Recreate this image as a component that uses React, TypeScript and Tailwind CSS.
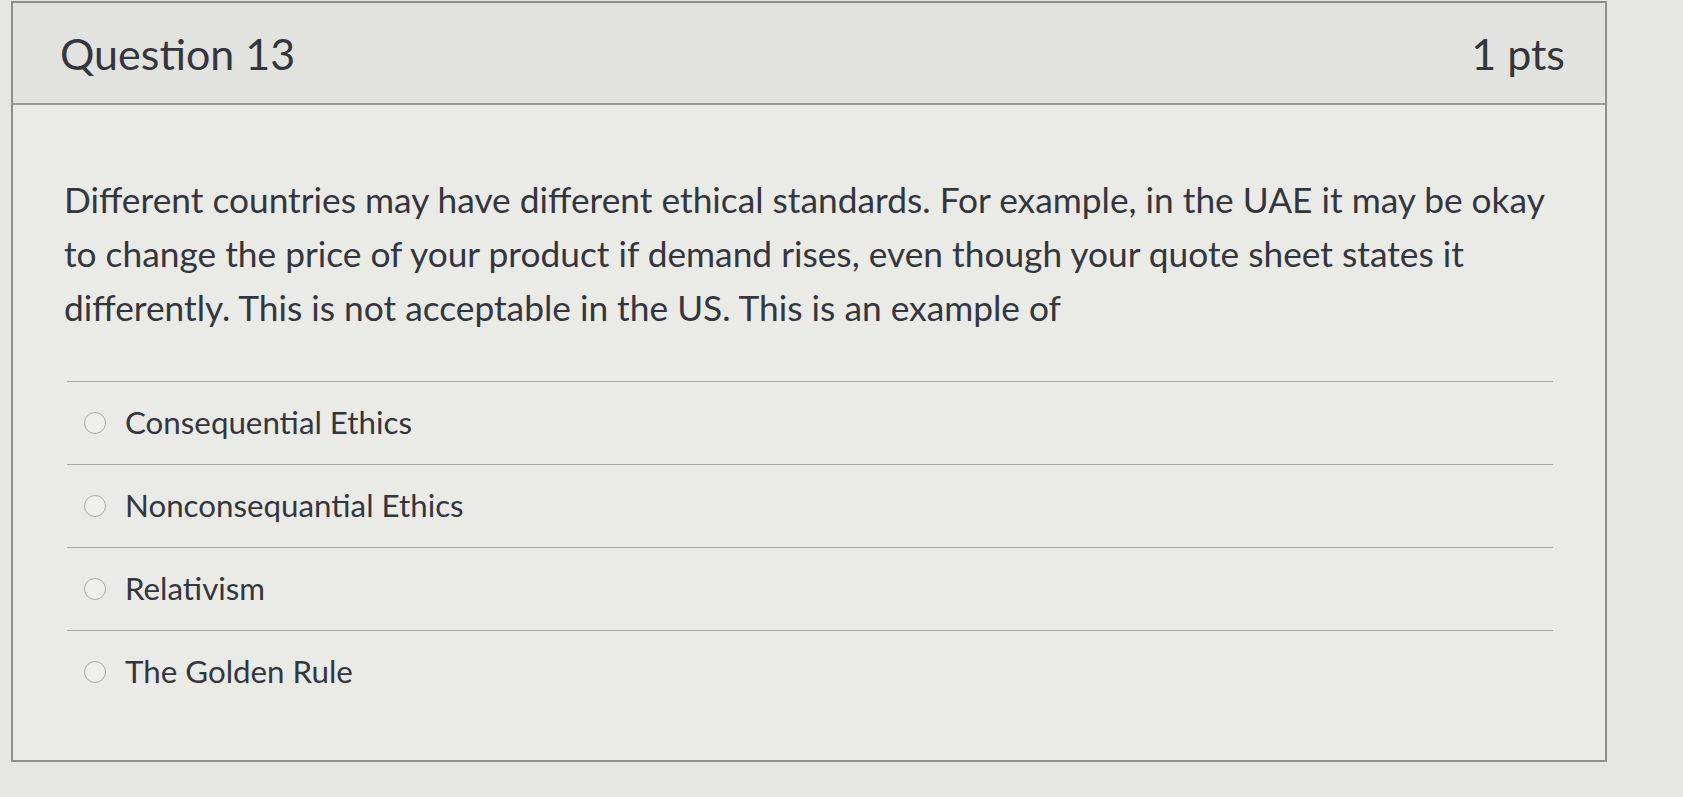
import React from "react";

const answers = [
  "Consequential Ethics",
  "Nonconsequantial Ethics",
  "Relativism",
  "The Golden Rule",
];

export default function App() {
  return (
    <div
      className="w-[1683px] h-[797px] bg-[#e6e6e2] overflow-hidden pt-[1px] pl-[11px]"
      style={{ fontFamily: "Lato, 'Open Sans', sans-serif" }}
    >
      <div className="w-[1596px] h-[761px] border-2 border-[#8e8e8e] bg-[#eaeae6] flex flex-col">
        <div className="h-[102px] shrink-0 bg-[#e2e2de] border-b-2 border-[#9a9a9a] flex items-center justify-between pl-[47px] pr-[40px] text-[#34363e]">
          <span className="text-[43px] leading-none">Question 13</span>
          <span className="text-[43px] leading-none">1 pts</span>
        </div>
        <div className="pl-[51px] pr-[44px] pt-[68px] text-[#34363e]">
          <p className="text-[35.3px] leading-[54px] w-[1510px]">
            Different countries may have different ethical standards. For example, in the UAE it may be okay to change the price of your product if demand rises, even though your quote sheet states it differently. This is not acceptable in the US. This is an example of
          </p>
          <div className="mt-[46px] mr-[8px] ml-[3px]">
            {answers.map((a) => (
              <div
                key={a}
                className="h-[83px] border-t-[1.5px] border-[#a8a8a6] flex items-center"
              >
                <span className="ml-[17px] w-[22px] h-[22px] rounded-full border-[1.5px] border-[#a9a9a9] bg-[#efefeb] shrink-0" />
                <span className="ml-[19px] text-[31.3px] leading-none">{a}</span>
              </div>
            ))}
          </div>
        </div>
      </div>
    </div>
  );
}
